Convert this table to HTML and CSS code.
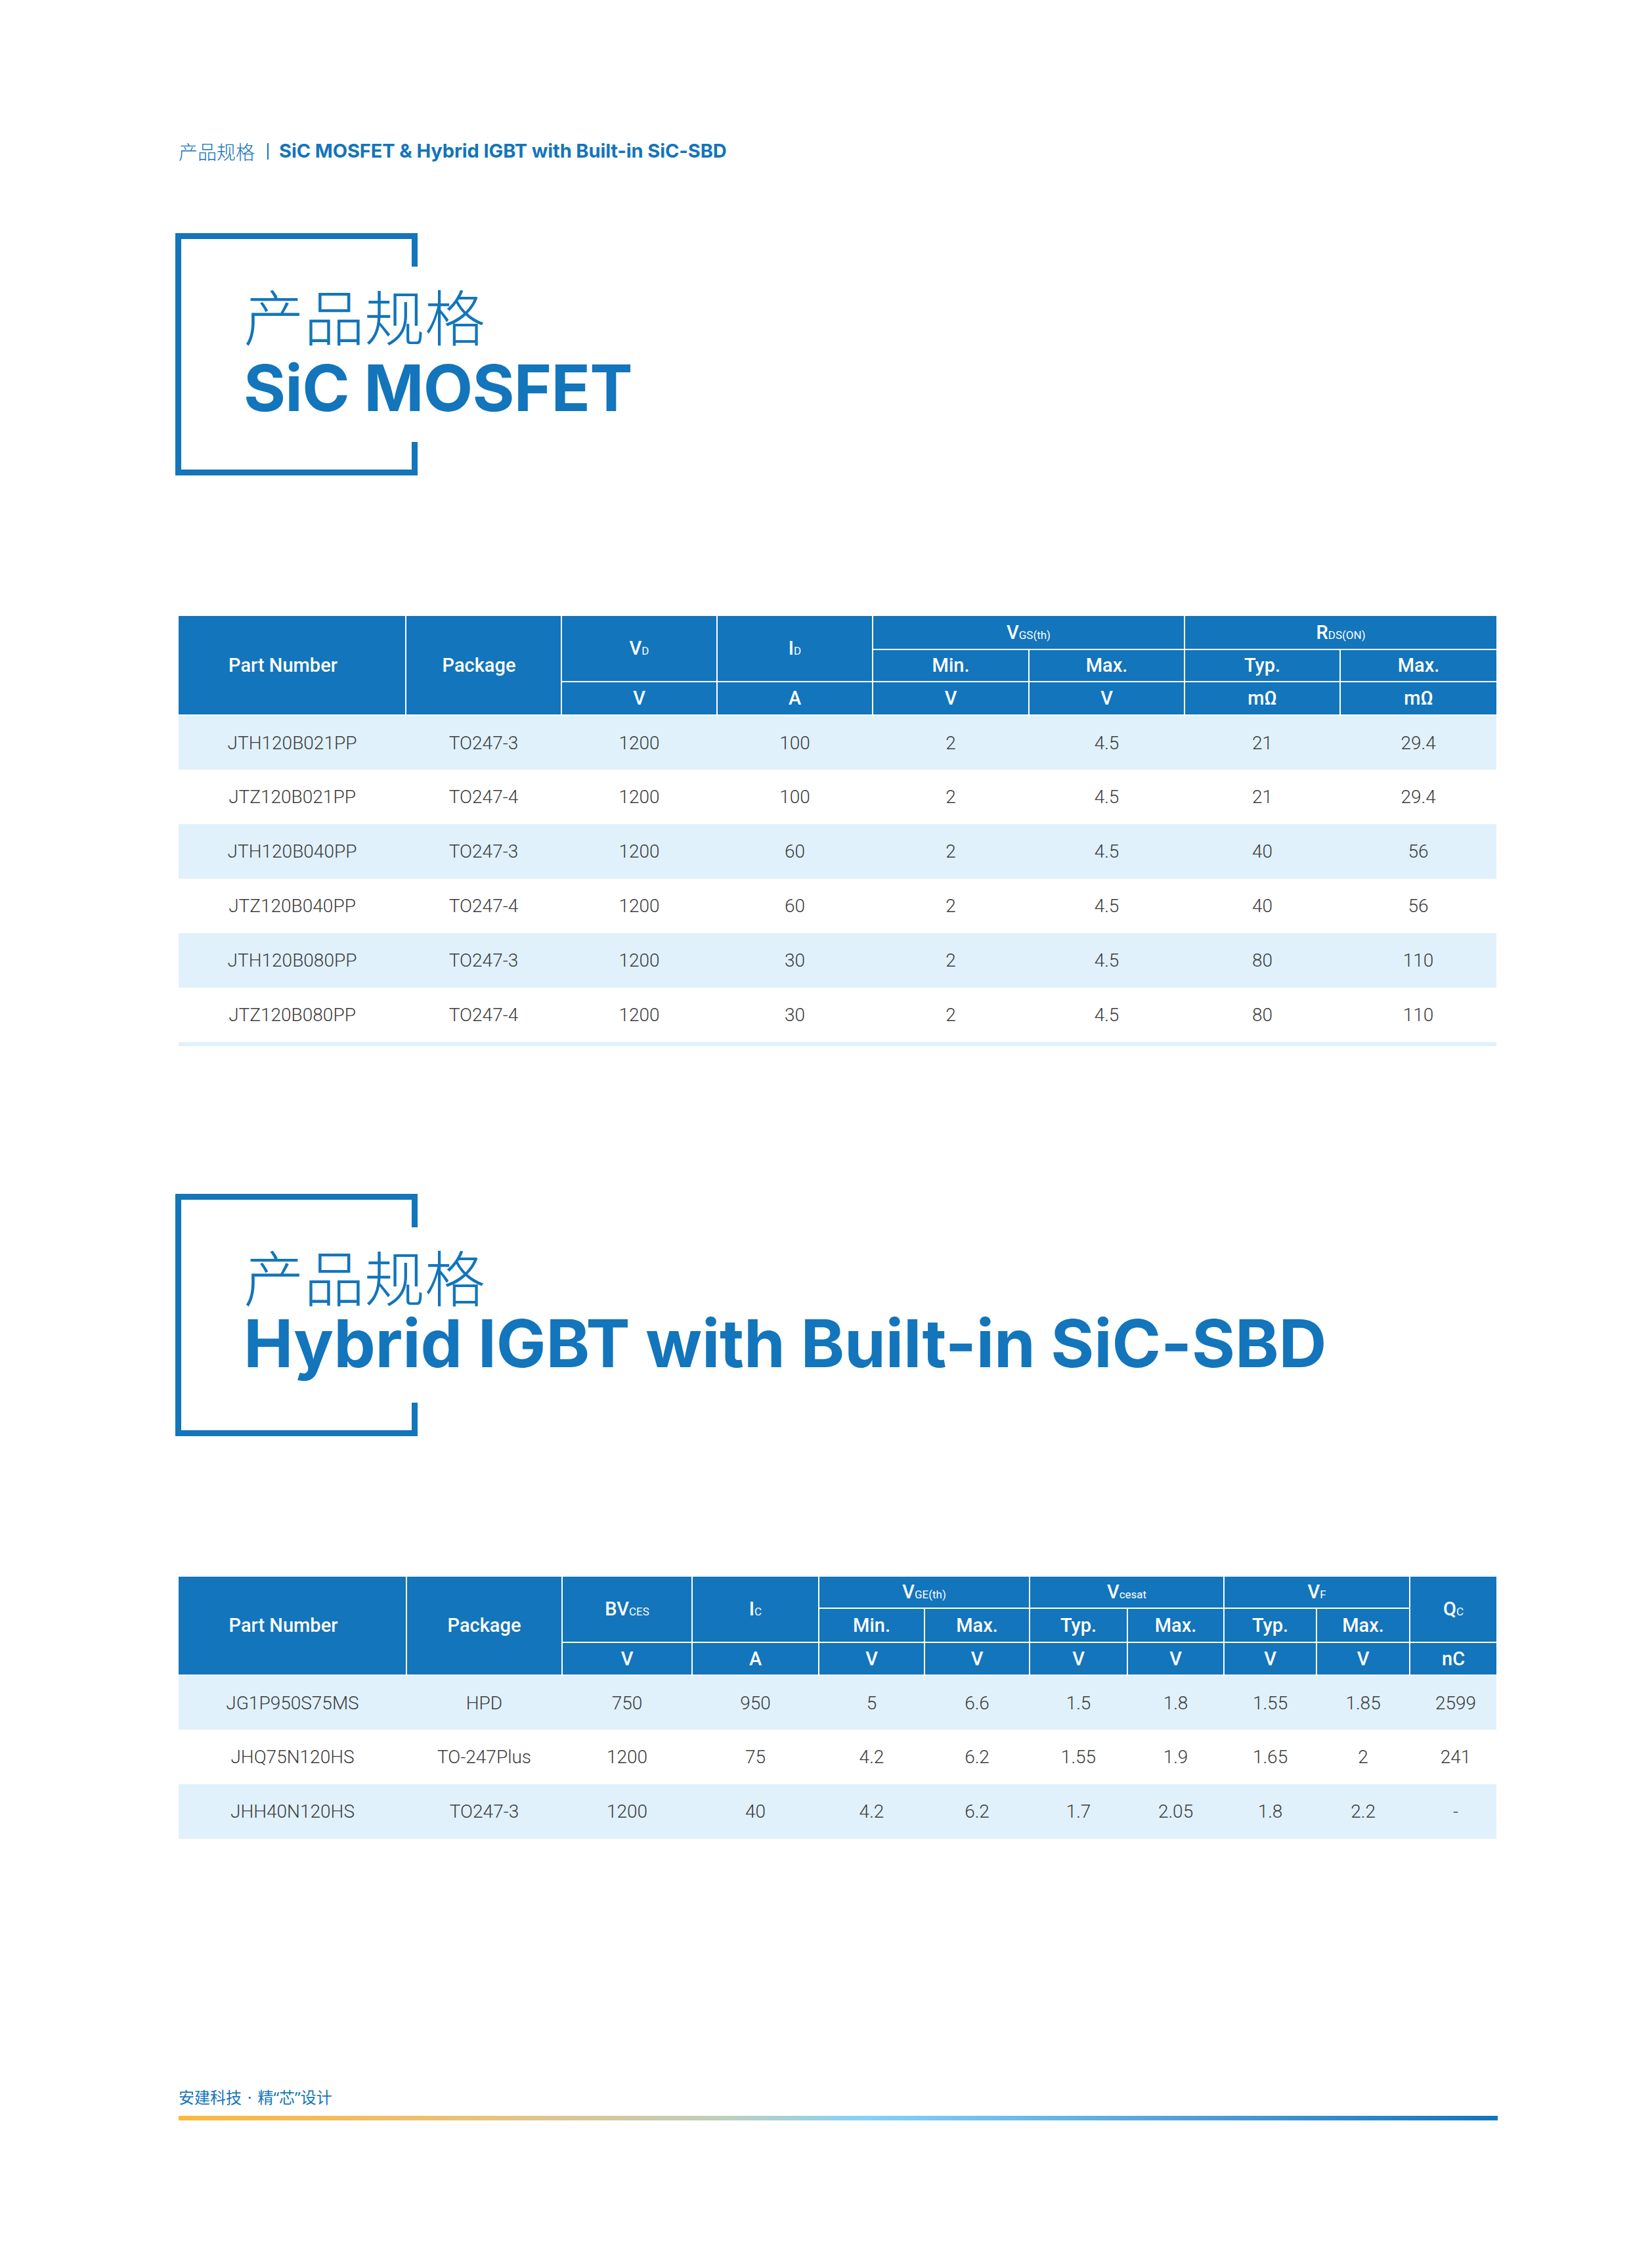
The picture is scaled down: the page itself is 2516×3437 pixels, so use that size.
FILE: index.html
```html
<!DOCTYPE html>
<html lang="zh-CN">
<head>
<meta charset="utf-8">
<title>产品规格 | SiC MOSFET &amp; Hybrid IGBT with Built-in SiC-SBD</title>
<link rel="stylesheet" href="styles.css">
</head>
<body>
<div class="page">
  <div class="crumb">
    <span class="crumb-cn">产品规格</span>
    <span class="crumb-sep"></span>
    <span class="crumb-en">SiC MOSFET &amp; Hybrid IGBT with Built-in SiC-SBD</span>
  </div>

  <div class="bracket bracket-1">
    <div class="bracket-title">
      <div class="title-cn">产品规格</div>
      <div class="title-en title-en-1">SiC MOSFET</div>
    </div>
  </div>

  <table class="spec spec-1">
    <colgroup>
      <col style="width:346px"><col style="width:237px"><col style="width:237px"><col style="width:237px">
      <col style="width:238px"><col style="width:237px"><col style="width:237px"><col style="width:238px">
    </colgroup>
    <thead>
      <tr class="h-a1">
        <th rowspan="3" class="pn">Part Number</th>
        <th rowspan="3" class="pkg">Package</th>
        <th rowspan="2">V<span class="sub">D</span></th>
        <th rowspan="2">I<span class="sub">D</span></th>
        <th colspan="2">V<span class="sub">GS(th)</span></th>
        <th colspan="2">R<span class="sub">DS(ON)</span></th>
      </tr>
      <tr class="h-b1">
        <th>Min.</th><th>Max.</th><th>Typ.</th><th>Max.</th>
      </tr>
      <tr class="h-c1">
        <th>V</th><th>A</th><th>V</th><th>V</th><th>mΩ</th><th>mΩ</th>
      </tr>
    </thead>
    <tbody>
      <tr><td>JTH120B021PP</td><td>TO247-3</td><td>1200</td><td>100</td><td>2</td><td>4.5</td><td>21</td><td>29.4</td></tr>
      <tr><td>JTZ120B021PP</td><td>TO247-4</td><td>1200</td><td>100</td><td>2</td><td>4.5</td><td>21</td><td>29.4</td></tr>
      <tr><td>JTH120B040PP</td><td>TO247-3</td><td>1200</td><td>60</td><td>2</td><td>4.5</td><td>40</td><td>56</td></tr>
      <tr><td>JTZ120B040PP</td><td>TO247-4</td><td>1200</td><td>60</td><td>2</td><td>4.5</td><td>40</td><td>56</td></tr>
      <tr><td>JTH120B080PP</td><td>TO247-3</td><td>1200</td><td>30</td><td>2</td><td>4.5</td><td>80</td><td>110</td></tr>
      <tr><td>JTZ120B080PP</td><td>TO247-4</td><td>1200</td><td>30</td><td>2</td><td>4.5</td><td>80</td><td>110</td></tr>
    </tbody>
  </table>
  <div class="table-end"></div>

  <div class="bracket bracket-2">
    <div class="bracket-title">
      <div class="title-cn">产品规格</div>
      <div class="title-en title-en-2">Hybrid IGBT with Built-in SiC-SBD</div>
    </div>
  </div>

  <table class="spec spec-2">
    <colgroup>
      <col style="width:347px"><col style="width:237px"><col style="width:198px"><col style="width:193px">
      <col style="width:161px"><col style="width:160px"><col style="width:149px"><col style="width:147px">
      <col style="width:141px"><col style="width:142px"><col style="width:132px">
    </colgroup>
    <thead>
      <tr class="h-a2">
        <th rowspan="3" class="pn">Part Number</th>
        <th rowspan="3">Package</th>
        <th rowspan="2">BV<span class="sub">CES</span></th>
        <th rowspan="2">I<span class="sub">C</span></th>
        <th colspan="2">V<span class="sub">GE(th)</span></th>
        <th colspan="2">V<span class="sub">cesat</span></th>
        <th colspan="2">V<span class="sub">F</span></th>
        <th rowspan="2">Q<span class="sub">C</span></th>
      </tr>
      <tr class="h-b2">
        <th>Min.</th><th>Max.</th><th>Typ.</th><th>Max.</th><th>Typ.</th><th>Max.</th>
      </tr>
      <tr class="h-c2">
        <th>V</th><th>A</th><th>V</th><th>V</th><th>V</th><th>V</th><th>V</th><th>V</th><th>nC</th>
      </tr>
    </thead>
    <tbody>
      <tr><td>JG1P950S75MS</td><td>HPD</td><td>750</td><td>950</td><td>5</td><td>6.6</td><td>1.5</td><td>1.8</td><td>1.55</td><td>1.85</td><td class="qc">2599</td></tr>
      <tr><td>JHQ75N120HS</td><td>TO-247Plus</td><td>1200</td><td>75</td><td>4.2</td><td>6.2</td><td>1.55</td><td>1.9</td><td>1.65</td><td>2</td><td class="qc">241</td></tr>
      <tr><td>JHH40N120HS</td><td>TO247-3</td><td>1200</td><td>40</td><td>4.2</td><td>6.2</td><td>1.7</td><td>2.05</td><td>1.8</td><td>2.2</td><td class="qc">-</td></tr>
    </tbody>
  </table>

  <div class="footer">
    <div class="footer-text">安建科技<span class="dot">·</span>精<span class="q">“</span>芯<span class="q">”</span>设计</div>
    <div class="footer-line"></div>
  </div>
</div>
</body>
</html>
```

FILE: styles.css
```css
* { box-sizing: border-box; }

html, body {
  margin: 0;
  padding: 0;
  background: #ffffff;
}

body {
  width: 2516px;
  min-height: 3437px;
  font-family: Inter, "Noto Sans CJK SC", sans-serif;
  color: #1375bb;
}

.page {
  width: 2516px;
  padding: 210px 0 0 272px;
}

/* breadcrumb */
.crumb {
  display: flex;
  align-items: center;
  height: 40px;
  white-space: nowrap;
}

.crumb-cn {
  font-family: "Noto Sans CJK SC", sans-serif;
  font-size: 29px;
  font-weight: 300;
  line-height: 40px;
}

.crumb-sep {
  display: block;
  width: 2px;
  height: 25px;
  background: #1375bb;
  margin: 0 16px 0 19px;
}

.crumb-en {
  font-family: Inter, sans-serif;
  font-size: 29px;
  font-weight: 700;
  line-height: 40px;
  letter-spacing: -0.1px;
}

/* bracket title blocks */
.bracket {
  position: relative;
  width: 369px;
  height: 369px;
  margin-left: -5px;
  border: 9px solid #1375bb;
  border-right: none;
}

.bracket::before,
.bracket::after {
  content: "";
  position: absolute;
  right: 0;
  width: 9px;
  height: 51px;
  background: #1375bb;
}

.bracket::before { top: -9px; }
.bracket::after { bottom: -9px; }

.bracket-1 { margin-top: 105px; }
.bracket-2 { margin-top: 225px; }

.bracket-title {
  padding: 69px 0 0 95px;
  white-space: nowrap;
}

.title-cn {
  font-family: "Noto Sans CJK SC", sans-serif;
  font-size: 92px;
  font-weight: 300;
  line-height: 92px;
}

.title-en {
  font-family: Inter, sans-serif;
  font-weight: 700;
}

.title-en-1 {
  font-size: 98px;
  line-height: 98px;
  letter-spacing: -0.8px;
  margin-top: 17px;
}

.title-en-2 {
  font-size: 101px;
  line-height: 101px;
  letter-spacing: -0.2px;
  margin-top: 7px;
}

/* tables */
.spec {
  border-collapse: collapse;
  border: hidden;
  table-layout: fixed;
  width: 2007px;
  margin-top: 214px;
}

.spec th {
  background: #1375bb;
  color: #ffffff;
  border: 2px solid #ffffff;
  font-family: Roboto, "Liberation Sans", sans-serif;
  font-weight: 500;
  font-size: 29px;
  line-height: 1;
  padding: 0;
  text-align: center;
  vertical-align: middle;
  white-space: nowrap;
}

.spec th.pn { padding-right: 27px; }
.spec th.pkg { padding-right: 14px; }

.spec .sub {
  font-size: 17px;
  font-weight: 400;
}

.h-a1 { height: 51px; }
.h-b1 { height: 49px; }
.h-c1 { height: 51px; }

.h-a2 { height: 48px; }
.h-b2 { height: 52px; }
.h-c2 { height: 50px; }

.spec td {
  height: 83px;
  padding: 0;
  border: none;
  font-family: Roboto, "Liberation Sans", sans-serif;
  font-weight: 300;
  font-size: 28px;
  color: #3c3c3c;
  text-align: center;
  vertical-align: middle;
  white-space: nowrap;
}

.spec td.qc { padding-left: 8px; }

.spec tbody tr:nth-child(odd) td {
  background: #e0f1fb;
}

.table-end {
  width: 2007px;
  height: 6px;
  background: #e0f1fb;
}

/* footer */
.footer {
  margin-top: 378px;
}

.footer-text {
  font-family: "Noto Sans CJK SC", sans-serif;
  font-size: 24px;
  line-height: 30px;
  color: #1375bb;
  white-space: nowrap;
}

.footer-text .dot {
  font-family: "Noto Sans", sans-serif;
  margin: 0 9px;
}

.footer-text .q {
  font-family: "Noto Sans", sans-serif;
}

.footer-line {
  margin-top: 13px;
  width: 2009px;
  height: 7px;
  background: linear-gradient(90deg, #fbb93a 0%, #e8c27e 24%, #bccfc0 42%, #84d3f5 52%, #5ca9df 72%, #1374bb 100%);
}
```
